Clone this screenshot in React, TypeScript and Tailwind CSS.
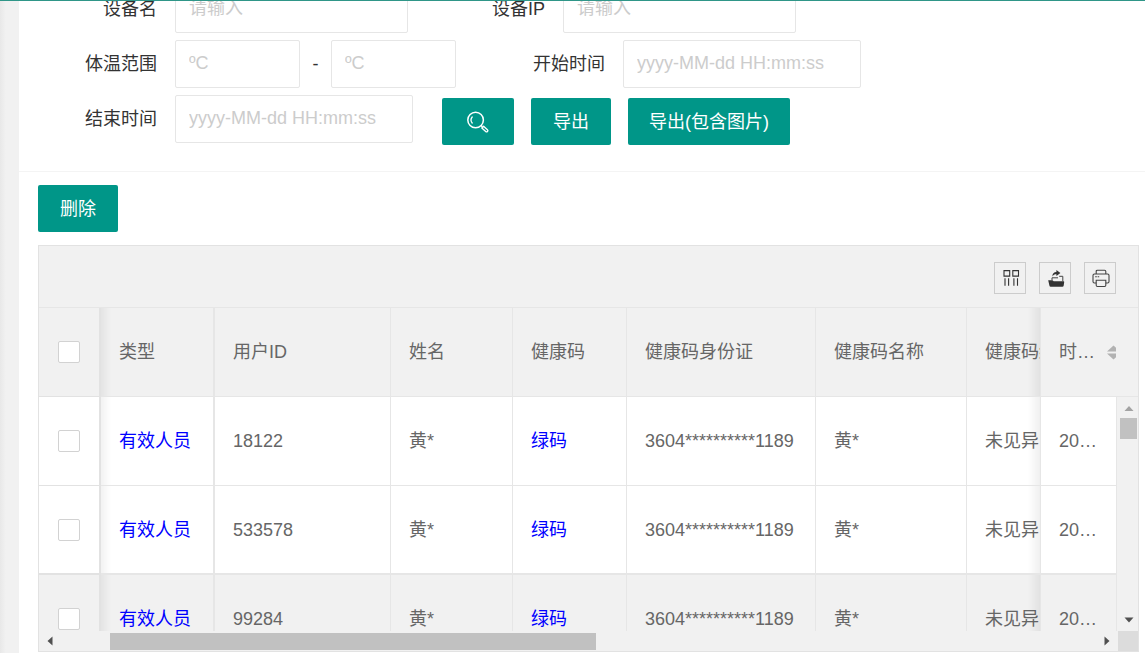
import type { ReactNode } from "react";

const columns = [
  { key: "type", label: "类型" },
  { key: "userId", label: "用户ID" },
  { key: "name", label: "姓名" },
  { key: "code", label: "健康码" },
  { key: "idCard", label: "健康码身份证" },
  { key: "codeName", label: "健康码名称" },
  { key: "status", label: "健康码结" },
] as const;

type Row = Record<(typeof columns)[number]["key"] | "time", string>;

const base = {
  type: "有效人员",
  name: "黄*",
  code: "绿码",
  idCard: "3604**********1189",
  codeName: "黄*",
  status: "未见异常",
  time: "20…",
};

const rows: Row[] = [
  { ...base, userId: "18122" },
  { ...base, userId: "533578" },
  { ...base, userId: "99284" },
];

function Field({ id, label, placeholder, width }: { id: string; label: string; placeholder: string; width: string }) {
  return (
    <div className="flex items-start">
      <FieldLabel htmlFor={id}>{label}</FieldLabel>
      <TextBox id={id} placeholder={placeholder} width={width} />
    </div>
  );
}

function FieldLabel({ htmlFor, children }: { htmlFor: string; children: ReactNode }) {
  return (
    <label htmlFor={htmlFor} className="w-[155px] shrink-0 pr-[18px] text-right leading-[48px] text-[#333]">
      {children}
    </label>
  );
}

function TextBox({ id, placeholder, width, label }: { id: string; placeholder: string; width: string; label?: string }) {
  return (
    <input
      id={id}
      type="text"
      aria-label={label}
      placeholder={placeholder}
      className={`h-12 rounded-xs border border-[#e6e6e6] bg-white px-[13px] pb-px text-[#333] outline-none placeholder:text-[#ccc] ${width}`}
    />
  );
}

function Button({ children, width, label }: { children: ReactNode; width: string; label?: string }) {
  return (
    <button
      type="button"
      aria-label={label}
      className={`flex h-[47px] items-center justify-center rounded-xs bg-[#009688] whitespace-nowrap text-white ${width}`}
    >
      {children}
    </button>
  );
}

function SearchIcon() {
  return (
    <svg className="size-[22px]" viewBox="0 0 22 22" fill="none" stroke="currentColor" strokeWidth="1.5">
      <circle cx="8.6" cy="9" r="7.8" />
      <path d="M5.2 12A4.700 4.700 0 0 1 5.2 6" strokeWidth="1.3" strokeLinecap="round" />
      <path d="M14 14.400l1.400 1.400" />
      <path d="M14.800 17l1.800-1.800 3.800 3.500a1.200 1.200 0 0 1-1.700 1.800z" strokeWidth="1.300" strokeLinejoin="round" />
    </svg>
  );
}

function ColumnsIcon() {
  return (
    <svg className="size-5" viewBox="0 0 20 20" fill="none" stroke="#333" strokeWidth="1.1">
      <path d="M4 2.600h5.700v5.500H4zM12.800 2.600h5.700v5.500h-5.700z" />
      <path d="M5 10.300v7.500M8.600 10.300v7.500M13.900 10.300v7.500M17.500 10.300v7.500" />
    </svg>
  );
}

function ExportIcon() {
  return (
    <svg className="size-5" viewBox="0 0 20 20" fill="#333">
      <path d="M3.200 12.200h4.300l1.200 1H18.600q.6 0 .6.700l-.5 3.700q-.2 1.200-1.300 1.200H5.700q-1.100 0-1.300-1.200z" />
      <path d="M7 12.200V9.800h6M14.200 8.300h3.600v5" fill="none" stroke="#444" strokeWidth="1" />
      <path d="M7.400 8.600C7.300 5.400 9 3.900 11.400 3.900V2L15.400 5l-4 3V6.200C9.600 6.200 8.300 6.800 7.400 8.600z" />
    </svg>
  );
}

function PrintIcon() {
  return (
    <svg className="size-5" viewBox="0 0 20 20" fill="none" stroke="#444" strokeWidth="1.1">
      <path d="M6.200 6V3.400q0-1.200 1.200-1.200h7.200q1.200 0 1.200 1.200V6" />
      <path d="M6.200 15H4.400Q3 15 3 13.600V7.500Q3 6 4.400 6h13.200Q19 6 19 7.500v6.100Q19 15 17.600 15h-1.800" />
      <path d="M6.200 12.300h9.600v5q0 1.200-1.200 1.200H7.400q-1.200 0-1.200-1.200z" />
      <path d="M5.200 8.700h1.600M7.600 8.700h1.600" />
    </svg>
  );
}

function ToolButton({ label, children }: { label: string; children: ReactNode }) {
  return (
    <button type="button" aria-label={label} className="flex size-8 items-center justify-center border border-[#ccc]">
      {children}
    </button>
  );
}

function CheckBox({ label }: { label: string }) {
  return (
    <input
      type="checkbox"
      aria-label={label}
      className="block size-[22px] appearance-none rounded-xs border border-[#d2d2d2] bg-white"
    />
  );
}

const leftFixed =
  "sticky left-0 z-10 border-r-2 pl-[19px] after:absolute after:inset-y-0 after:-right-3 after:w-[10px] after:bg-linear-to-r after:from-black/5 after:to-transparent";
const rightFixed =
  "sticky right-0 z-10 border-l pl-[18px] before:absolute before:inset-y-0 before:-left-[13px] before:w-3 before:bg-linear-to-l before:from-black/6 before:to-transparent";

function RecordTable() {
  return (
    <table className="w-full min-w-[1194px] table-fixed border-separate border-spacing-0 text-left text-[#666]">
      <colgroup>
        <col className="w-[62px]" />
        <col className="w-[114px]" />
        <col className="w-[176px]" />
        <col className="w-[122px]" />
        <col className="w-[114px]" />
        <col className="w-[189px]" />
        <col className="w-[151px]" />
        <col className="w-[189px]" />
        <col className="w-[77px]" />
      </colgroup>
      <thead>
        <tr className="h-[89px]">
          <th className={`border-b border-[#e2e2e2] bg-[#f1f1f1] py-0 pr-0 ${leftFixed}`}>
            <CheckBox label="全选" />
          </th>
          {columns.map((c) => (
            <th
              key={c.key}
              className={`border-b border-[#e6e6e6] bg-[#f1f1f1] px-[18px] py-0 font-normal whitespace-nowrap ${c.key === "type" ? "border-r-2" : "border-r"}`}
            >
              {c.label}
            </th>
          ))}
          <th className={`border-b border-[#e6e6e6] bg-[#f1f1f1] py-0 pr-px font-normal ${rightFixed}`}>
            <div className="flex items-center gap-3 overflow-hidden whitespace-nowrap">
              时…
              <svg className="h-[15px] w-[13px] shrink-0" viewBox="0 0 13 15" fill="#b2b2b2" aria-hidden="true">
                <path d="M6.500 0.500L13 6.500H0zM0 8.500h13L6.500 14.500z" />
              </svg>
            </div>
          </th>
        </tr>
      </thead>
      <tbody>
        {rows.map((row, i) => {
          const tone = i === 2 ? "bg-[#f1f1f1]" : "bg-white";
          const line = i === 1 ? "border-b-2" : "border-b";
          return (
            <tr key={row.userId} className="h-[89px]">
              <td className={`border-[#e2e2e2] py-0 pr-0 ${tone} ${line} ${leftFixed}`}>
                <CheckBox label={row.userId} />
              </td>
              {columns.map((c) => (
                <td
                  key={c.key}
                  className={`border-[#e6e6e6] px-[18px] py-0 whitespace-nowrap ${tone} ${line} ${c.key === "type" ? "border-r-2" : "border-r"}`}
                >
                  {c.key === "type" || c.key === "code" ? (
                    <a href="#" className="text-[#0000ff]">
                      {row[c.key]}
                    </a>
                  ) : (
                    row[c.key]
                  )}
                </td>
              ))}
              <td className={`border-r border-[#e6e6e6] py-0 pr-0 whitespace-nowrap ${tone} ${line} ${rightFixed}`}>
                {row.time}
              </td>
            </tr>
          );
        })}
      </tbody>
    </table>
  );
}

function Arrow({ className, d }: { className: string; d: string }) {
  return (
    <svg className={className} viewBox="0 0 10 10" fill="currentColor" aria-hidden="true">
      <path d={d} />
    </svg>
  );
}

export default function App() {
  return (
    <div className="relative flex h-screen overflow-hidden bg-white font-['Liberation_Sans','Noto_Sans_CJK_SC',sans-serif] text-[18px] leading-6">
      <div className="absolute inset-x-0 top-0 z-20 h-px bg-[#2f9688]" />
      <div className="w-[19px] shrink-0 bg-linear-to-r from-[#e8e8e8] to-[#f1f1f1] to-30%" />
      <main className="min-w-0 flex-1 overflow-hidden">
        <form className="-mt-[15px] flex flex-col gap-[7px] border-b border-[#f4f4f4] pb-[26px] pl-px">
          <div className="flex">
            <Field id="device-name" label="设备名" placeholder="请输入" width="w-[233px]" />
            <Field id="device-ip" label="设备IP" placeholder="请输入" width="w-[233px]" />
          </div>
          <div className="flex">
            <Field id="temp-min" label="体温范围" placeholder="ºC" width="w-[125px]" />
            <span className="w-[31px] text-center leading-[48px] text-[#333]">-</span>
            <TextBox id="temp-max" label="体温上限" placeholder="ºC" width="w-[125px]" />
            <div className="pl-3">
              <Field id="start-time" label="开始时间" placeholder="yyyy-MM-dd HH:mm:ss" width="w-[238px]" />
            </div>
          </div>
          <div className="flex">
            <Field id="end-time" label="结束时间" placeholder="yyyy-MM-dd HH:mm:ss" width="w-[238px]" />
            <div className="flex gap-[17px] pt-[3px] pl-[29px]">
              <Button width="w-[72px]" label="搜索">
                <SearchIcon />
              </Button>
              <Button width="w-20">导出</Button>
              <Button width="w-[162px]">导出(包含图片)</Button>
            </div>
          </div>
        </form>
        <section className="pt-[13px] pr-[6px] pl-[19px]">
          <Button width="w-20">删除</Button>
          <div className="mt-[13px] border border-[#e2e2e2]">
            <div className="flex h-[62px] justify-end gap-[13px] border-b border-[#e6e6e6] bg-[#f1f1f1] pt-4 pr-[22px]">
              <ToolButton label="筛选列">
                <ColumnsIcon />
              </ToolButton>
              <ToolButton label="导出">
                <ExportIcon />
              </ToolButton>
              <ToolButton label="打印">
                <PrintIcon />
              </ToolButton>
            </div>
            <div className="flex h-[323px]">
              <div className="min-w-0 flex-1 overflow-hidden">
                <RecordTable />
              </div>
              <div className="flex w-[21px] shrink-0 flex-col bg-[#f1f1f1]">
                <div className="h-[89px] shrink-0 border-b border-[#e6e6e6]" />
                <div className="flex flex-1 flex-col items-center pt-[6px] pb-[6px] pl-[2px]">
                  <Arrow className="size-[10px] text-[#a3a3a3]" d="M5 3L9.500 8H.5z" />
                  <div className="mt-[5px] h-[21px] w-[17px] bg-[#c1c1c1]" />
                  <Arrow className="mt-auto size-[10px] text-[#505050]" d="M.5 2.500h9L5 7.500z" />
                </div>
              </div>
            </div>
            <div className="flex h-5 bg-[#f1f1f1]">
              <div className="flex flex-1 items-center px-[6px]">
                <Arrow className="size-[10px] text-[#505050]" d="M7.500.5v9L2.500 5z" />
                <div className="ml-[55px] h-[17px] w-[486px] bg-[#c1c1c1]" />
                <Arrow className="ml-auto size-[10px] text-[#505050]" d="M2.500.5v9L7.500 5z" />
              </div>
              <div className="w-5 bg-[#dcdcdc]" />
            </div>
          </div>
        </section>
      </main>
    </div>
  );
}
